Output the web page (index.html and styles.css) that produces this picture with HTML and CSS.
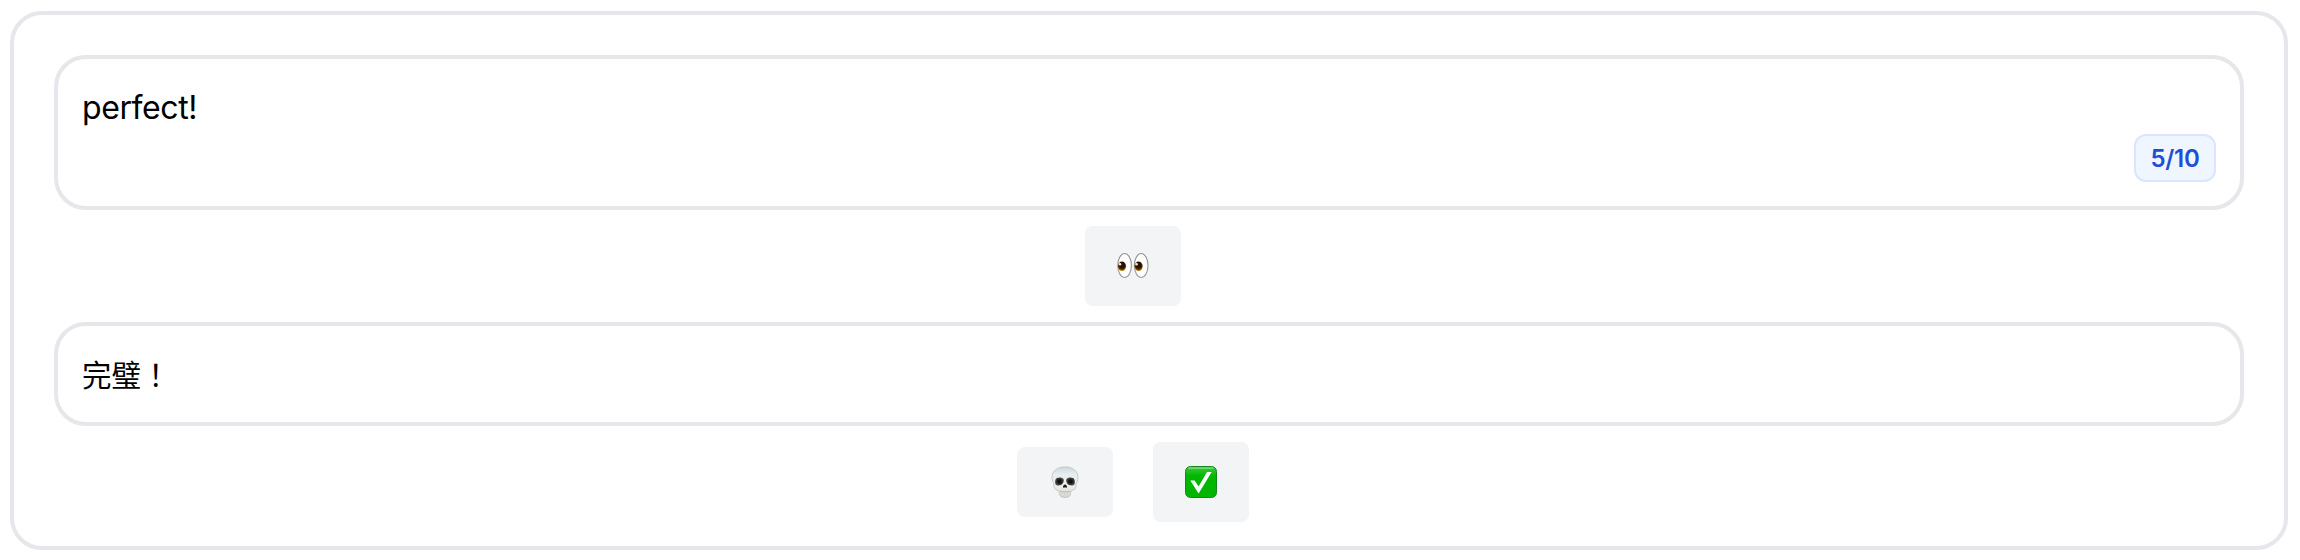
FILE: index.html
```html
<!DOCTYPE html>
<html lang="en">
<head>
<meta charset="utf-8">
<title>Flashcard</title>
<link rel="stylesheet" href="styles.css">
</head>
<body>
<main class="card">
  <section class="field field-answer">
    <p class="answer">perfect!</p>
    <span class="count">5/10</span>
  </section>
  <div class="actions">
    <button class="action" aria-label="Reveal">
      <svg class="icon" viewBox="0 0 32 32">
        <defs>
          <radialGradient id="iris" cx=".5" cy=".35" r=".65">
            <stop offset=".5" stop-color="#2b1000"/><stop offset=".75" stop-color="#6b3c00"/><stop offset="1" stop-color="#d0a010"/>
          </radialGradient>
          <linearGradient id="rim" x1="0" x2="0" y1="0" y2="1">
            <stop offset="0" stop-color="#8c8c8c"/><stop offset="1" stop-color="#9c9c9c"/>
          </linearGradient>
        </defs>
        <ellipse cx="7.600" cy="15.500" rx="6.800" ry="12" fill="#fff" stroke="url(#rim)" stroke-width="1.100"/>
        <ellipse cx="24.200" cy="15.500" rx="6.800" ry="12" fill="#fff" stroke="url(#rim)" stroke-width="1.100"/>
        <ellipse cx="5" cy="16.300" rx="4.100" ry="4.800" fill="url(#iris)"/>
        <ellipse cx="21.600" cy="16.300" rx="4.100" ry="4.800" fill="url(#iris)"/>
        <circle cx="3" cy="14.300" r="1.300" fill="#f2e6dc"/>
        <circle cx="19.600" cy="14.300" r="1.300" fill="#f2e6dc"/>
      </svg>
    </button>
  </div>
  <section class="field">
    <p class="prompt" lang="zh-Hant">完璧！</p>
  </section>
  <div class="actions">
    <button class="action action-short" aria-label="Wrong">
      <svg class="icon" viewBox="0 0 32 32">
        <defs>
          <linearGradient id="bone" x1="0" x2="0" y1="0" y2="1">
            <stop offset="0" stop-color="#d0d7db"/><stop offset=".25" stop-color="#e6eef1"/><stop offset=".6" stop-color="#eeeeec"/><stop offset="1" stop-color="#d6d5d0"/>
          </linearGradient>
          <radialGradient id="socket">
            <stop offset=".35" stop-color="#111"/><stop offset="1" stop-color="#505050"/>
          </radialGradient>
        </defs>
        <path d="M16 .9C8 .9 3 5.200 3 11.500c0 3 1.300 4.700 1.900 6.500.4 1.700-.2 3.300.8 4.600 1.200 1.500 3.500 1.500 4.300 2.800.6 1 .3 2.800 1 4.200.9 1.400 2.500 1.800 5 1.800s4.100-.4 5-1.800c.7-1.400.4-3.200 1-4.200.8-1.300 3.100-1.300 4.300-2.800 1-1.300.4-2.900.8-4.600.6-1.800 1.900-3.500 1.900-6.500C29 5.200 24 .9 16 .9z" fill="url(#bone)" stroke="#aab0b1" stroke-width=".6"/>
        <path d="M7.400 12.300c2.400-1.300 6-.9 7.100.7.900 1.700-.2 5-2.400 6-2.200.8-4.900.6-5.700-1.100-.7-1.700-.2-4.800 1-5.600z" fill="url(#socket)"/>
        <path d="M24.600 12.300c-2.400-1.300-6-.9-7.100.7-.9 1.700.2 5 2.400 6 2.200.8 4.900.6 5.700-1.100.7-1.700.2-4.800-1-5.600z" fill="url(#socket)"/>
        <path d="M16 18.600c-1.100 0-2.300 1.800-2 2.700.3.700 1.300.1 2 .1s1.700.6 2-.1c.3-.9-.9-2.700-2-2.700z" fill="#1c1c1c"/>
        <path d="M10.800 25c3.200 1.300 7.200 1.300 10.400 0" fill="none" stroke="#aaa9a4" stroke-width=".8"/>
        <path d="M13.400 26.200v2.500M16 26.400v2.800M18.600 26.200v2.500" fill="none" stroke="#c8c7c2" stroke-width=".5"/>
      </svg>
    </button>
    <button class="action" aria-label="Correct">
      <svg class="icon" viewBox="0 0 32 32">
        <defs>
          <linearGradient id="green" x1="0" x2="0" y1="0" y2="1">
            <stop offset="0" stop-color="#3cc63c"/><stop offset=".2" stop-color="#18bd18"/><stop offset=".3" stop-color="#00b800"/><stop offset="1" stop-color="#00b400"/>
          </linearGradient>
        </defs>
        <rect x=".5" y=".5" width="31" height="31" rx="5" fill="url(#green)" stroke="#168a16"/>
        <path d="M4 2.200h24" stroke="#83e183" stroke-width="1.200" stroke-linecap="round"/>
        <path d="M5.300 14.600h4.300l4 6L22 6h4.700L13.600 27.400z" fill="#fff"/>
      </svg>
    </button>
  </div>
</main>
</body>
</html>
```
FILE: styles.css
```css
* {
  box-sizing: border-box;
}

body {
  margin: 0;
  padding: 11px 12px 10px 10px;
  background: #fff;
  color: #000;
  font-family: Inter, "Liberation Sans", sans-serif;
}

.card {
  padding: 40px 40px 24px;
  border: 4px solid #e5e7eb;
  border-radius: 32px;
}

.field {
  display: flex;
  flex-direction: column;
  height: 104px;
  padding: 24px;
  border: 4px solid #e5e7eb;
  border-radius: 32px;
}

.field-answer {
  height: 155px;
  justify-content: space-between;
}

.answer,
.prompt {
  margin: 0;
  font-size: 32px;
}

.answer {
  height: 48px;
  line-height: 50px;
  letter-spacing: -0.4px;
}

.prompt {
  font-family: "Noto Sans CJK TC", sans-serif;
  font-size: 29.5px;
  line-height: 46px;
}

.count {
  display: flex;
  flex: none;
  align-items: center;
  justify-content: center;
  align-self: flex-end;
  width: 82px;
  height: 48px;
  padding-top: 1px;
  border: 2px solid #dbe6fd;
  border-radius: 12px;
  background: #eff6ff;
  color: #1d4ed8;
  font-size: 24px;
  font-weight: 600;
  letter-spacing: -0.3px;
}

.actions {
  display: flex;
  align-items: center;
  justify-content: center;
  gap: 40px;
  padding: 16px 32px 16px 0;
}

.actions:last-child {
  padding-bottom: 0;
}

.action {
  display: flex;
  align-items: center;
  justify-content: center;
  width: 96px;
  height: 80px;
  padding: 0;
  border: 0;
  border-radius: 8px;
  background: #f3f4f6;
}

.action-short {
  height: 70px;
}

.icon {
  width: 32px;
  height: 32px;
}
```
